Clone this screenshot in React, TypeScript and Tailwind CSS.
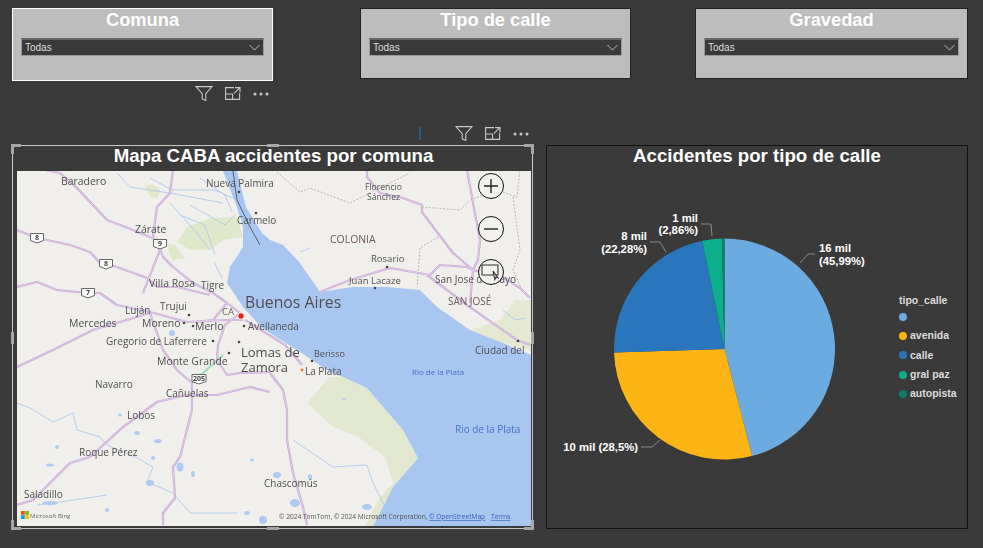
import React from "react";

const roads = [
  "45,170 60,173 77,188 107,220 133,230 157,240 163,257 173,267 193,283 213,293 227,303 240,313",
  "17,230 37,238 47,240 70,245 90,252 100,263 117,267 147,278 157,287 177,287 210,295",
  "17,287 37,282 57,290 87,293 100,293 117,305 150,312 187,322 227,320 243,320",
  "173,170 170,193 157,207 153,237 160,250 143,293",
  "17,367 53,350 93,330 150,313",
  "17,505 33,500 53,480 70,463 90,457 123,427 157,402 187,395 217,395 250,387 270,392",
  "163,525 163,513 175,498 173,467 180,457 192,410 192,383 177,370 163,350 150,313",
  "270,373 283,390 287,410 287,440 293,473 303,507 307,525",
  "227,303 213,320 195,322",
  "240,313 225,325 218,345 217,360 227,375 240,373 270,372",
  "245,320 285,345 302,365",
  "320,292 350,280 390,268 430,275 440,265 467,267 473,270",
  "367,170 367,177 380,193 403,198 422,205 422,212 437,232 453,253 473,270",
  "467,170 473,203 480,240 478,260 473,270 470,303",
  "427,275 467,305 517,340 530,345",
  "473,270 503,277 520,288 530,298",
];

const borders = [
  "277,172 300,192 310,188 350,203 370,193 410,173",
  "422,207 460,210 470,200 497,190 517,197 520,170",
  "513,197 520,250 513,270 522,290",
  "438,237 420,248 417,287",
];

const rivers = [
  "117,173 130,187 170,193 223,203",
  "170,203 197,233 210,250",
  "150,178 172,190 215,190 237,200",
  "190,205 225,225 235,215",
  "200,178 225,195 232,212",
  "180,215 205,225 215,255",
  "214,262 222,278",
  "17,403 30,408 53,422 73,413 77,430 100,437 107,445 137,458 153,467 147,482 173,493 190,513 237,513",
  "293,440 333,467 367,465 373,483 385,507",
  "37,505 60,502 107,495",
  "300,252 310,248",
  "503,310 515,320 525,318",
];

const lakes = [
  [137, 433, 3, 2], [158, 441, 4, 2], [180, 467, 3.5, 4.5], [193, 474, 2, 3], [150, 483, 4, 3],
  [50, 465, 4, 1.5], [107, 510, 2, 2], [50, 503, 8, 2], [153, 458, 2, 2], [252, 460, 2, 1.5],
  [247, 513, 3, 2], [263, 520, 4, 4], [277, 475, 4, 3], [295, 503, 5, 4], [367, 507, 5, 3],
  [310, 477, 2, 3], [344, 399, 2, 1], [120, 415, 2, 1.5], [57, 447, 2, 2], [172, 333, 3, 3],
];

const places: [string, number, number, number, string?][] = [
  ["Baradero", 61, 185, 11],
  ["Nueva Palmira", 206, 187, 10.5],
  ["Carmelo", 237, 224, 10.5],
  ["Zárate", 135, 233, 11],
  ["COLONIA", 330, 243, 11, "#6d5c58"],
  ["Rosario", 371, 262, 10],
  ["Juan Lacaze", 349, 284, 10],
  ["San Jose de Mayo", 435, 283, 10.5],
  ["SAN JOSÉ", 448, 305, 10.5, "#6d5c58"],
  ["Villa Rosa", 149, 287, 11],
  ["Tigre", 201, 289, 10.5],
  ["Buenos Aires", 245, 308, 16.6],
  ["CA", 222, 315, 10, "#6d5c58"],
  ["Trujui", 160, 310, 10.5],
  ["Luján", 125, 314, 10.5],
  ["Mercedes", 69, 327, 11],
  ["Moreno", 142, 327, 11],
  ["Merlo", 195, 330, 11],
  ["Avellaneda", 248, 330, 10.5],
  ["Gregorio de Laferrere", 106, 345, 10.5],
  ["Monte Grande", 157, 365, 11],
  ["Berisso", 314, 357, 9.5],
  ["La Plata", 305, 375, 10.5],
  ["Navarro", 95, 388, 10.5],
  ["Cañuelas", 166, 397, 10.5],
  ["Lobos", 127, 419, 10.5],
  ["Roque Pérez", 79, 456, 10.5],
  ["Chascomús", 264, 487, 10.5],
  ["Saladillo", 24, 498, 10.5],
  ["Ciudad del", 475, 354, 10.5],
  ["Rio de la Plata", 412, 375, 8.4, "#4a72c4"],
  ["Rio de la Plata", 455, 433, 10.5, "#4a72c4"],
];

const shields: [string, number, number][] = [
  ["8", 37, 238],
  ["8", 106, 264],
  ["9", 160, 244],
  ["7", 88, 293],
  ["205", 199, 379],
];

const dots = [
  [189, 315], [184, 323], [193, 326], [213, 341], [239, 342], [244, 326],
  [312, 361], [229, 353], [518, 341], [387, 267], [375, 288], [239, 192], [256, 213],
];

const slices = [
  { pct: 45.99, color: "#6cabe0" },
  { pct: 28.5, color: "#fdb515" },
  { pct: 22.28, color: "#2a76bd" },
  { pct: 2.86, color: "#0cae8c" },
  { pct: 0.37, color: "#0f7c6c" },
];

const legend = [
  { label: "", color: "#6cabe0" },
  { label: "avenida", color: "#fdb515" },
  { label: "calle", color: "#2a76bd" },
  { label: "gral paz", color: "#0cae8c" },
  { label: "autopista", color: "#0f7c6c" },
];

const pieLabels: [string, number, number, "start" | "end"][] = [
  ["16 mil", 819, 252, "start"],
  ["(45,99%)", 819, 265, "start"],
  ["10 mil (28,5%)", 638, 451, "end"],
  ["8 mil", 647, 240, "end"],
  ["(22,28%)", 647, 253, "end"],
  ["1 mil", 698, 222, "end"],
  ["(2,86%)", 698, 234, "end"],
];

function slicePath(from: number, to: number) {
  const cx = 724.5;
  const cy = 349;
  const r = 110.5;
  const a = (from / 100) * Math.PI * 2 - Math.PI / 2;
  const b = (to / 100) * Math.PI * 2 - Math.PI / 2;
  const large = to - from > 50 ? 1 : 0;
  return `M${cx} ${cy}L${cx + r * Math.cos(a)} ${cy + r * Math.sin(a)}A${r} ${r} 0 ${large} 1 ${cx + r * Math.cos(b)} ${cy + r * Math.sin(b)}Z`;
}

const Toolbar = () => (
  <div className="flex items-center gap-[12px] text-[#c8c8c8]">
    <svg width="18" height="15" viewBox="0 0 18 15" fill="none" stroke="currentColor" strokeWidth="1.1">
      <path d="M1 .6h16l-6.2 7v6.8l-3.6-1.6V7.6z" />
    </svg>
    <svg width="16" height="13" viewBox="0 0 16 13" fill="none" stroke="currentColor" strokeWidth="1.1">
      <path d="M9 .6H.6v11.8h14V6M.6 7h7v5.4M10 .6h5v4.6M15 .6L9 6.4" />
    </svg>
    <svg width="16" height="4" viewBox="0 0 16 4" fill="currentColor">
      <circle cx="2" cy="2" r="1.5" />
      <circle cx="8" cy="2" r="1.5" />
      <circle cx="14" cy="2" r="1.5" />
    </svg>
  </div>
);

const Slicer = ({ title, className }: { title: string; className: string }) => (
  <div className={`bg-[#bdbdbd] flex flex-col ${className}`}>
    <div className="h-[21px] text-center text-[18.3px] font-bold leading-[21px] text-white">{title}</div>
    <div className="mx-2 mt-2 flex h-[18px] items-center justify-between border border-[#9a9a9a] border-t-2 border-t-[#666666] bg-[#3a3a3a] pl-[3px] pr-[3px]">
      <span className="text-[10px] text-[#dddddd]">Todas</span>
      <svg width="11" height="7" viewBox="0 0 11 7" fill="none" stroke="#c8c8c8" strokeWidth="0.9">
        <path d="M.5 1l5 5 5-5" />
      </svg>
    </div>
  </div>
);

const Handle = ({ className }: { className: string }) => (
  <div className={`absolute bg-[#a6a6a6] ${className}`} />
);

const MapButton = ({ children }: { children: React.ReactNode }) => (
  <div className="flex h-[26px] w-[26px] items-center justify-center rounded-full border-[1.5px] border-[#111111] bg-[#f2f1ed]">
    {children}
  </div>
);

const MapDrawing = () => (
  <svg viewBox="17 171 514 355" className="h-[355px] w-[514px] bg-[#f0efeb] font-['Open_Sans',sans-serif] blur-[0.35px]">
    <polygon
      points="177,242 187,227 210,218 237,217 243,237 223,240 210,250 190,250"
      fill="#dfe8c8"
    />
    <polygon points="146,187 153,184 160,190 158,198 150,197" fill="#dfe8c8" />
    <polygon points="167,244 175,245 185,258 172,260" fill="#dfe8c8" />
    <polygon
      points="307,403 330,377 343,377 367,388 403,430 418,458 393,487 383,507 373,526 365,526 378,500 393,483 385,457 360,438 333,427"
      fill="#e2e8cf"
    />
    <polygon points="470,330 503,343 531,350 531,300 515,300 500,320" fill="#e6e9d2" />
    <polygon
      points="223,171 237,171 246,207 262,233 270,240 283,245 300,263 320,292 353,287 387,287 420,290 437,307 470,330 503,343 531,355 531,526 373,526 383,507 393,487 418,458 403,430 367,388 343,377 330,372 300,352 262,328 243,307 227,283 230,267 243,247 243,227 237,207"
      fill="#a9c6f1"
    />
    {rivers.map((p) => (
      <polyline key={p} points={p} fill="none" stroke="#b4cdee" strokeWidth="1" />
    ))}
    {lakes.map(([cx, cy, rx, ry]) => (
      <ellipse key={`${cx}-${cy}`} cx={cx} cy={cy} rx={rx} ry={ry} fill="#b0cbf2" />
    ))}
    {borders.map((p) => (
      <polyline key={p} points={p} fill="none" stroke="#b8b7b0" strokeWidth="1" strokeDasharray="2 1.5" />
    ))}
    <polyline points="233,171 237,200 250,227 260,245" fill="none" stroke="#55606c" strokeWidth="1" />
    <polyline points="223,355 203,373 192,383" fill="none" stroke="#9fdcc6" strokeWidth="2" />
    {roads.map((p) => (
      <polyline key={p} points={p} fill="none" stroke="#c8a9d6" strokeWidth="2.2" strokeLinejoin="round" />
    ))}
    {roads.map((p) => (
      <polyline key={`${p}-in`} points={p} fill="none" stroke="#ead9ef" strokeWidth="0.7" strokeLinejoin="round" />
    ))}
    {shields.map(([t, x, y]) => (
      <g key={`${t}-${x}`}>
        <path
          d={`M${x - (t.length > 1 ? 7 : 6.5)} ${y - 4.5}h${t.length > 1 ? 14 : 13}v7l-${t.length > 1 ? 7 : 6.5} 2.5l-${t.length > 1 ? 7 : 6.5} -2.5z`}
          fill="#fdfdfd"
          stroke="#555555"
          strokeWidth="0.9"
        />
        <text x={x} y={y + 2} textAnchor="middle" fontSize="7" fontWeight="700" fill="#444444">
          {t}
        </text>
      </g>
    ))}
    {dots.map(([cx, cy]) => (
      <circle key={`${cx}-${cy}`} cx={cx} cy={cy} r="1.3" fill="#444444" />
    ))}
    <circle cx="241" cy="316" r="3.2" fill="#e2231a" stroke="#ffffff" strokeWidth="0.8" />
    <circle cx="302" cy="370" r="1.4" fill="#f07a30" />
    {places.map(([name, x, y, size, color]) => (
      <text key={`${name}-${x}`} x={x} y={y} fontSize={size * 0.95} fill={color ?? "#4f4f4f"}>
        {name}
      </text>
    ))}
    <text fontSize="8.6" fill="#4f4f4f">
      <tspan x="365" y="190">Florencio</tspan>
      <tspan x="367" y="200">Sánchez</tspan>
    </text>
    <text fontSize="13" fill="#4a4a4a">
      <tspan x="241" y="357">Lomas de</tspan>
      <tspan x="241" y="372">Zamora</tspan>
    </text>
    <rect x="21" y="511" width="3.8" height="3.8" fill="#f25022" />
    <rect x="25.2" y="511" width="3.8" height="3.8" fill="#7fba00" />
    <rect x="21" y="515.2" width="3.8" height="3.8" fill="#00a4ef" />
    <rect x="25.2" y="515.2" width="3.8" height="3.8" fill="#ffb900" />
    <text x="30" y="518" fontSize="6" fill="#666666">Microsoft Bing</text>
    <text x="279" y="519" fontSize="6.6" fill="#555555">
      © 2024 TomTom, © 2024 Microsoft Corporation,
    </text>
    <text x="429" y="519" fontSize="6.6" fill="#3a62b8" textDecoration="underline">© OpenStreetMap</text>
    <text x="491" y="519" fontSize="6.6" fill="#3a62b8" textDecoration="underline">Terms</text>
  </svg>
);

const MapVisual = () => (
  <div className="relative flex h-[384px] w-[521px] flex-col border border-[#c8c8c8] bg-[#3a3a3a] pl-[4px]">
    <div className="h-[25px] pr-[2px] text-center text-[18.67px] font-bold leading-[20px] text-white">
      Mapa CABA accidentes por comuna
    </div>
    <MapDrawing />
    <div className="absolute left-[465px] top-[27px] flex flex-col gap-[17px]">
      <MapButton>
        <svg width="16" height="16" viewBox="0 0 16 16" stroke="#222222" strokeWidth="1.4">
          <path d="M1 8h14M8 1v14" />
        </svg>
      </MapButton>
      <MapButton>
        <svg width="16" height="16" viewBox="0 0 16 16" stroke="#222222" strokeWidth="1.4">
          <path d="M1 8h14" />
        </svg>
      </MapButton>
      <MapButton>
        <svg width="20" height="18" viewBox="0 0 20 18" fill="none" stroke="#333333" strokeWidth="1.1">
          <path d="M1 2h16v10H1z" />
          <path d="M12 8l5 7-2.2-.8-1 2.3z" fill="#f2f1ed" />
        </svg>
      </MapButton>
    </div>
    <Handle className="-left-[2px] -top-[2px] h-[10px] w-[3px]" />
    <Handle className="-left-[2px] -top-[2px] h-[3px] w-[10px]" />
    <Handle className="-right-[2px] -top-[2px] h-[10px] w-[3px]" />
    <Handle className="-right-[2px] -top-[2px] h-[3px] w-[10px]" />
    <Handle className="-left-[2px] -bottom-[2px] h-[10px] w-[3px]" />
    <Handle className="-left-[2px] -bottom-[2px] h-[3px] w-[10px]" />
    <Handle className="-right-[2px] -bottom-[2px] h-[10px] w-[3px]" />
    <Handle className="-right-[2px] -bottom-[2px] h-[3px] w-[10px]" />
    <Handle className="left-[254px] -top-[2px] h-[3px] w-[12px]" />
    <Handle className="left-[254px] -bottom-[2px] h-[3px] w-[12px]" />
    <Handle className="-left-[2px] top-[186px] h-[12px] w-[3px]" />
    <Handle className="-right-[2px] top-[186px] h-[12px] w-[3px]" />
  </div>
);

const PieVisual = () => {
  let start = 0;
  return (
    <div className="h-[384px] w-[422px] border border-[#111111]">
      <div className="h-[24px] text-center text-[18.67px] font-bold leading-[20px] text-white">
        Accidentes por tipo de calle
      </div>
      <div className="flex">
        <svg viewBox="547 170 350 358" className="h-[358px] w-[350px]">
          {slices.map((s) => {
            const d = slicePath(start, start + s.pct);
            start += s.pct;
            return <path key={s.color} d={d} fill={s.color} />;
          })}
          <g fill="none" stroke="#8a8a8a" strokeWidth="1">
            <polyline points="815,254 808,254 800,263" />
            <polyline points="641,447 652,447 660,440" />
            <polyline points="650,242 660,242 666,252" />
            <polyline points="701,224 711,224 712,236" />
          </g>
          {pieLabels.map(([t, x, y, anchor]) => (
            <text key={t} x={x} y={y} textAnchor={anchor} fontSize="11.3" fontWeight="700" fill="#ffffff">
              {t}
            </text>
          ))}
        </svg>
        <div className="flex flex-col pl-[2px] pt-[124px]">
          <div className="h-[13px] text-[10.5px] font-bold leading-[13px] text-[#dcdcdc]">tipo_calle</div>
          {legend.map((l) => (
            <div key={l.color} className="flex h-[19.4px] items-center gap-[3px]">
              <span className="h-[8px] w-[8px] rounded-full" style={{ backgroundColor: l.color }} />
              <span className="text-[10.5px] font-bold text-[#dcdcdc]">{l.label}</span>
            </div>
          ))}
        </div>
      </div>
    </div>
  );
};

export default function App() {
  return (
    <div className="h-[548px] w-[983px] overflow-hidden bg-[#3a3a3a] font-['Liberation_Sans',Arial,sans-serif]">
      <div className="flex items-start pl-[12px] pt-[8px]">
        <div className="flex h-[111px] w-[261px] flex-col">
          <Slicer title="Comuna" className="h-[73px] border border-white" />
          <div className="mt-[5px] flex justify-end pr-[4px]">
            <Toolbar />
          </div>
        </div>
        <Slicer title="Tipo de calle" className="ml-[87px] h-[71px] w-[271px] border border-[#222222]" />
        <Slicer title="Gravedad" className="ml-[64px] h-[71px] w-[273px] border border-[#222222]" />
      </div>
      <div className="flex items-end gap-[13px] pl-[12px]">
        <div className="flex flex-col">
          <div className="flex h-[26px] items-start justify-end pr-[4px] pt-[7px]">
            <div className="mr-[34px] mt-[-1px] h-[15px] w-[2px] border-t-2 border-t-[#3a3a3a] bg-[#2a5a8a]" />
            <Toolbar />
          </div>
          <MapVisual />
        </div>
        <PieVisual />
      </div>
    </div>
  );
}
